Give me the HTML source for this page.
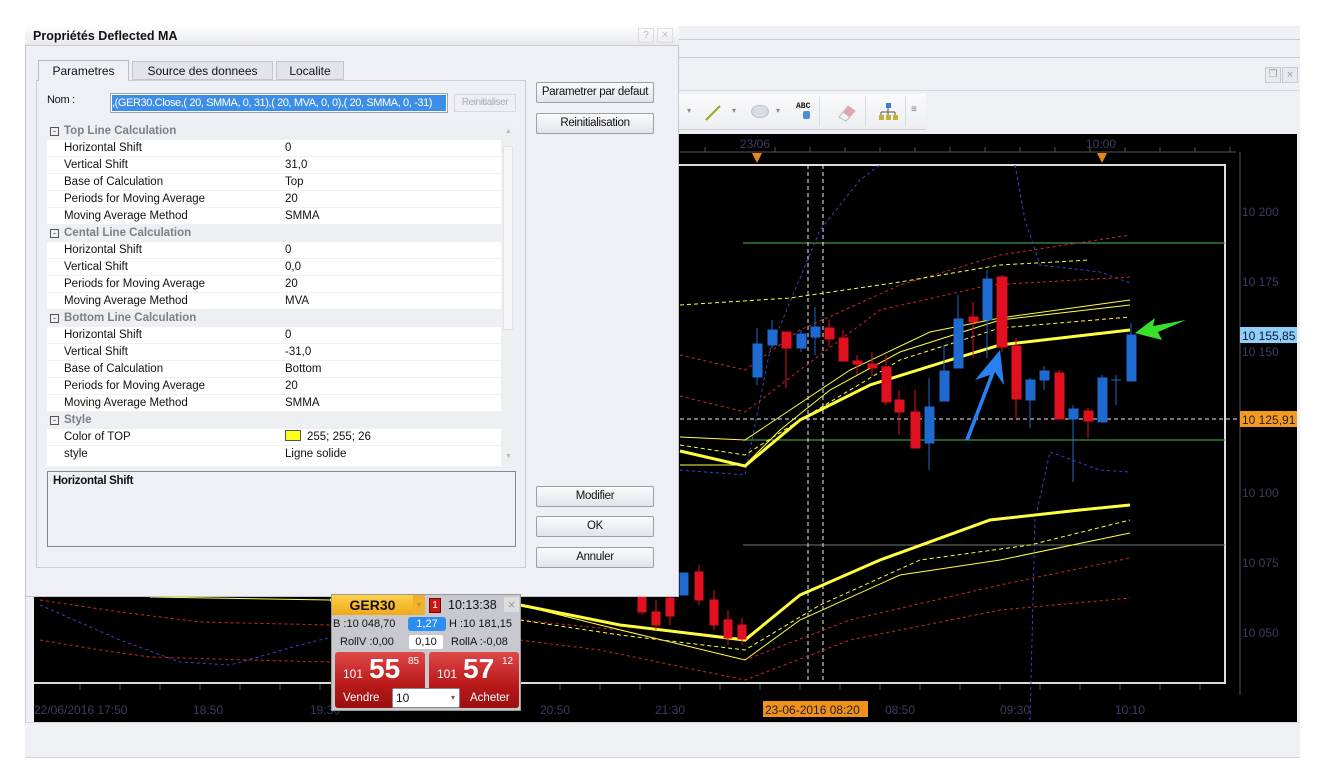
<!DOCTYPE html>
<html><head><meta charset="utf-8"><style>
*{box-sizing:border-box;margin:0;padding:0}
body{width:1322px;height:776px;background:#fff;position:relative;overflow:hidden;font-family:"Liberation Sans",sans-serif;font-size:12px;color:#111}
.abs{position:absolute}
.btn{position:absolute;left:536px;width:118px;height:21px;border:1px solid #9aa0a8;border-radius:2px;background:linear-gradient(#fbfbfc,#e2e4e8);font-size:11.5px;text-align:center;line-height:19px;letter-spacing:-0.3px}
.row{position:absolute;left:47px;width:454px;height:17px;font-size:11.5px;line-height:17px;background:#fff;border-bottom:1px solid #eef0f3}
.row .k{position:absolute;left:17px}
.row .v{position:absolute;left:238px}
.cat{position:absolute;left:47px;width:454px;height:17px;background:#eeeff3;font-weight:bold;color:#7b7f88;font-size:11.5px;line-height:17px}
.cat .k{position:absolute;left:17px}
.cat .box{position:absolute;left:3px;top:4px;width:9px;height:9px;border:1px solid #555;font-size:9px;line-height:6px;text-align:center;color:#333;font-weight:normal}
</style></head><body>
<div class="abs" style="left:25px;top:26px;width:1275px;height:732px;background:#eef0f4;border-left:1px solid #c8ccd2"></div>
<div class="abs" style="left:25px;top:39px;width:1275px;height:1px;background:#c3c8d0"></div>
<div class="abs" style="left:25px;top:57px;width:1275px;height:1px;background:#c3c8d0"></div>
<div class="abs" style="left:25px;top:90px;width:1275px;height:1px;background:#d6d9de"></div>
<div class="abs" style="left:1265px;top:67px;width:16px;height:16px;border:1px solid #c6cad0;background:#e8eaee;color:#999;font-size:10px;text-align:center;line-height:14px">❐</div>
<div class="abs" style="left:1282px;top:67px;width:16px;height:16px;border:1px solid #c6cad0;background:#e8eaee;color:#999;font-size:11px;text-align:center;line-height:14px">×</div>
<div class="abs" style="left:675px;top:94px;width:251px;height:36px;background:linear-gradient(#fafafb,#eceef1);border-bottom:1px solid #cfd3d8"></div>
<div class="abs" style="left:687px;top:106px;color:#888;font-size:8px">▾</div>
<svg class="abs" style="left:703px;top:103px" width="20" height="20"><line x1="3" y1="17" x2="17" y2="3" stroke="#9aa820" stroke-width="2"/></svg>
<div class="abs" style="left:732px;top:106px;color:#888;font-size:8px">▾</div>
<div class="abs" style="left:751px;top:105px;width:18px;height:13px;border-radius:50%;background:#d8dce6;border:1px solid #b8bdcc"></div>
<div class="abs" style="left:776px;top:106px;color:#888;font-size:8px">▾</div>
<div class="abs" style="left:796px;top:102px;font-size:8px;font-family:'Liberation Mono';font-weight:bold">ABC</div>
<div class="abs" style="left:803px;top:111px;width:7px;height:8px;background:#4a8fd0;border-radius:2px"></div>
<div class="abs" style="left:819px;top:96px;width:1px;height:30px;background:#d8dbe0"></div>
<svg class="abs" style="left:836px;top:102px" width="22" height="20"><path d="M3 15 L12 4 L19 9 L10 19 Z" fill="#e9a0a8" stroke="#bbb"/><path d="M3 15 L7 10 L14 15 L10 19Z" fill="#f2f2f2" stroke="#bbb"/></svg>
<div class="abs" style="left:865px;top:96px;width:1px;height:30px;background:#d8dbe0"></div>
<svg class="abs" style="left:878px;top:102px" width="20" height="20"><rect x="8" y="1" width="5" height="5" fill="#3a7fd0"/><path d="M10 6V10M3 10H17M3 10V13M10 10V13M17 10V13" stroke="#555" fill="none"/><rect x="1" y="13" width="5" height="5" fill="#c8b030"/><rect x="8" y="13" width="5" height="5" fill="#c8b030"/><rect x="15" y="13" width="5" height="5" fill="#c8b030"/></svg>
<div class="abs" style="left:905px;top:96px;width:1px;height:30px;background:#d8dbe0"></div>
<div class="abs" style="left:911px;top:104px;color:#777;font-size:10px">≡</div>

<svg class="abs" style="left:0;top:0" width="1322" height="776">
<rect x="34" y="134" width="1263" height="588" fill="#000"/>
<line x1="680" y1="152" x2="1236" y2="152" stroke="#555"/>
<g stroke="#555"><line x1="705" y1="152" x2="705" y2="147"/><line x1="775" y1="152" x2="775" y2="147"/><line x1="810" y1="152" x2="810" y2="147"/><line x1="845" y1="152" x2="845" y2="147"/><line x1="880" y1="152" x2="880" y2="147"/><line x1="915" y1="152" x2="915" y2="147"/><line x1="950" y1="152" x2="950" y2="147"/><line x1="985" y1="152" x2="985" y2="147"/><line x1="1020" y1="152" x2="1020" y2="147"/><line x1="1055" y1="152" x2="1055" y2="147"/><line x1="1090" y1="152" x2="1090" y2="147"/><line x1="1125" y1="152" x2="1125" y2="147"/><line x1="1160" y1="152" x2="1160" y2="147"/><line x1="1195" y1="152" x2="1195" y2="147"/><line x1="1230" y1="152" x2="1230" y2="147"/></g>
<text x="740" y="148" fill="#3a3d60" font-size="12" font-family="Liberation Sans">23/06</text>
<text x="1086" y="148" fill="#3a3d60" font-size="12" font-family="Liberation Sans">10:00</text>
<path d="M752 153 h10 l-5 10z" fill="#e58a1a"/><path d="M1097 153 h10 l-5 10z" fill="#e58a1a"/>
<path d="M34 165 H1225 V683 H34" fill="none" stroke="#ddd" stroke-width="2"/>
<line x1="1240" y1="152" x2="1240" y2="695" stroke="#555"/>
<g fill="#3a3d60" font-size="12" font-family="Liberation Sans">
<text x="1242" y="216">10 200</text><text x="1242" y="286">10 175</text><text x="1242" y="356">10 150</text><text x="1242" y="497">10 100</text><text x="1242" y="567">10 075</text><text x="1242" y="637">10 050</text>
<text x="34" y="714">22/06/2016 17:50</text><text x="193" y="714">18:50</text><text x="310" y="714">19:30</text><text x="540" y="714">20:50</text><text x="655" y="714">21:30</text><text x="885" y="714">08:50</text><text x="1000" y="714">09:30</text><text x="1115" y="714">10:10</text>
</g>
<rect x="763" y="701" width="105" height="16" fill="#f0911e"/>
<text x="765" y="714" font-size="12" fill="#222" font-family="Liberation Sans">23-06-2016 08:20</text>
<rect x="1240" y="327" width="57" height="16" fill="#8fd0f8"/><text x="1242" y="340" font-size="12" fill="#113" font-family="Liberation Sans">10 155,85</text>
<rect x="1240" y="411" width="57" height="16" fill="#f49a22"/><text x="1242" y="424" font-size="12" fill="#221" font-family="Liberation Sans">10 125,91</text>
<g stroke="#555"><path d="M80 684v6M120 684v6M160 684v6M200 684v6M240 684v6M280 684v6M320 684v6M360 684v6M400 684v6M440 684v6M480 684v6M520 684v6M560 684v6M600 684v6M640 684v6M680 684v6M720 684v6M760 684v6M800 684v6M840 684v6M880 684v6M920 684v6M960 684v6M1000 684v6M1040 684v6M1080 684v6M1120 684v6M1160 684v6M1200 684v6"/></g>
<line x1="743" y1="243" x2="1225" y2="243" stroke="#3c9a3c" stroke-width="1.3"/>
<line x1="743" y1="440" x2="1225" y2="440" stroke="#3c9a3c" stroke-width="1.3"/>
<line x1="743" y1="545" x2="1225" y2="545" stroke="#777"/>
<line x1="680" y1="419" x2="1240" y2="419" stroke="#eee" stroke-dasharray="4 3"/>
<line x1="808" y1="165" x2="808" y2="683" stroke="#eee" stroke-dasharray="4 3"/>
<line x1="823" y1="165" x2="823" y2="683" stroke="#eee" stroke-dasharray="4 3"/>
<g fill="none" stroke="#4040c8" stroke-dasharray="3 3">
<path d="M40 605 L120 640 L180 662 L230 665 L300 645 L400 620 L500 590 L560 565"/>
<path d="M680 470 L745 475 L770 350 L820 230 L860 180 L880 165"/>
<path d="M1015 165 L1025 220 L1040 265 L1100 272 L1130 283"/>
<path d="M1030 720 L1035 520 L1050 452 L1100 470 L1130 472"/>
</g>
<g fill="none" stroke="#d02828" stroke-dasharray="3 3">
<path d="M680 355 L745 370 L800 330 L900 285 L1000 255 L1130 235"/>
<path d="M680 396 L745 412 L800 370 L880 310 L990 285 L1130 277"/>
<path d="M40 600 L120 612 L200 622 L330 625"/>
<path d="M40 640 L100 650 L150 657 L250 660 L330 662"/>
<path d="M520 640 L600 650 L745 680 L850 640 L1000 610 L1130 598"/>
<path d="M520 620 L620 630 L745 660 L850 620 L1000 585 L1130 558"/>
</g>
<g fill="none" stroke="#ffff40">
<path d="M680 465 L745 465 L780 430 L830 390 L900 352 L1000 320 L1130 305"/>
<path d="M680 437 L745 440 L790 410 L850 370 L930 332 L1000 318 L1130 300" stroke-width="1"/>
<path d="M680 305 L790 298 L900 282 L1000 265 L1090 260" stroke-dasharray="4 3"/>
<path d="M680 445 L745 455 L800 420 L900 360 L1000 328 L1130 317" stroke-dasharray="4 3"/>
<path d="M680 451 L745 466 L800 420 L870 385 L950 360 L1000 345 L1130 330" stroke-width="3"/>
<path d="M150 597 L330 600"/>
<path d="M520 605 L600 625 L745 660 L800 620 L900 575 L1000 560 L1130 533"/>
<path d="M520 620 L620 635 L745 650 L820 605 L920 560 L1030 545 L1130 520" stroke-dasharray="4 3"/>
<path d="M380 600 L330 600 M520 605 L620 625 L745 640 L800 595 L880 560 L990 520 L1080 510 L1130 505" stroke-width="3"/>
</g>
<g stroke-width="1">
<g fill="#1e6ad0" stroke="#1e6ad0">
<line x1="757" y1="328" x2="757" y2="385"/><rect x="753" y="344" width="9" height="33"/>
<line x1="772" y1="320" x2="772" y2="348"/><rect x="768" y="330" width="9" height="15"/>
<line x1="801" y1="330" x2="801" y2="352"/><rect x="797" y="334" width="9" height="14"/>
<line x1="815" y1="307" x2="815" y2="355"/><rect x="811" y="327" width="9" height="10"/>
<line x1="929" y1="378" x2="929" y2="470"/><rect x="925" y="407" width="9" height="36"/>
<line x1="944" y1="345" x2="944" y2="401"/><rect x="940" y="371" width="9" height="30"/>
<line x1="958" y1="295" x2="958" y2="368"/><rect x="954" y="319" width="9" height="49"/>
<line x1="987" y1="270" x2="987" y2="358"/><rect x="983" y="279" width="9" height="41"/>
<line x1="1030" y1="378" x2="1030" y2="428"/><rect x="1026" y="380" width="9" height="20"/>
<line x1="1044" y1="366" x2="1044" y2="390"/><rect x="1040" y="371" width="9" height="9"/>
<line x1="1073" y1="405" x2="1073" y2="482"/><rect x="1069" y="409" width="9" height="10"/>
<line x1="1102" y1="375" x2="1102" y2="422"/><rect x="1098" y="378" width="9" height="44"/>
<line x1="1116" y1="375" x2="1116" y2="405"/><line x1="1111" y1="380" x2="1121" y2="380"/>
<line x1="1131" y1="323" x2="1131" y2="381"/><rect x="1127" y="335" width="9" height="46"/>
<rect x="680" y="573" width="8" height="22"/>
</g>
<g fill="#e01020" stroke="#e01020">
<line x1="786" y1="332" x2="786" y2="388"/><rect x="782" y="332" width="9" height="16"/>
<line x1="829" y1="320" x2="829" y2="347"/><rect x="825" y="328" width="9" height="11"/>
<line x1="843" y1="330" x2="843" y2="361"/><rect x="839" y="338" width="9" height="23"/>
<line x1="857" y1="355" x2="857" y2="375"/><rect x="853" y="361" width="9" height="3"/>
<line x1="872" y1="352" x2="872" y2="376"/><rect x="868" y="364" width="9" height="4"/>
<line x1="886" y1="355" x2="886" y2="405"/><rect x="882" y="367" width="9" height="35"/>
<line x1="899" y1="390" x2="899" y2="435"/><rect x="895" y="400" width="9" height="12"/>
<line x1="915" y1="390" x2="915" y2="448"/><rect x="911" y="412" width="9" height="36"/>
<line x1="973" y1="302" x2="973" y2="358"/><rect x="969" y="317" width="9" height="5"/>
<line x1="1002" y1="275" x2="1002" y2="352"/><rect x="997" y="277" width="10" height="70"/>
<line x1="1016" y1="338" x2="1016" y2="418"/><rect x="1012" y="346" width="9" height="53"/>
<line x1="1059" y1="370" x2="1059" y2="419"/><rect x="1055" y="373" width="9" height="46"/>
<line x1="1088" y1="408" x2="1088" y2="438"/><rect x="1084" y="411" width="9" height="10"/>
<line x1="642" y1="585" x2="642" y2="615"/><rect x="638" y="597" width="8" height="15"/>
<line x1="656" y1="600" x2="656" y2="630"/><rect x="652" y="612" width="8" height="13"/>
<line x1="670" y1="590" x2="670" y2="625"/><rect x="666" y="598" width="8" height="18"/>
<line x1="699" y1="565" x2="699" y2="605"/><rect x="695" y="572" width="8" height="28"/>
<line x1="714" y1="590" x2="714" y2="630"/><rect x="710" y="600" width="8" height="25"/>
<line x1="728" y1="610" x2="728" y2="645"/><rect x="724" y="620" width="8" height="18"/>
<line x1="742" y1="618" x2="742" y2="645"/><rect x="738" y="625" width="8" height="14"/>
</g>
</g>
<path d="M965 440 L990 375 L975 380 L1000 350 L1004 385 L995 372 L969 440 Z" fill="#2a80f0"/>
<path d="M1135 333 L1155 318 L1153 326 L1186 320 L1158 332 L1162 340 Z" fill="#39e02a"/>
</svg>
<div class="abs" style="left:25px;top:722px;width:1275px;height:36px;background:#eef0f4;border-top:1px solid #d0d4da;border-bottom:1px solid #d0d4da"></div>

<!-- dialog -->
<div class="abs" style="left:25px;top:26px;width:654px;height:571px;background:#eff0f5;border:1px solid #c4c7cf;border-top:none"></div>
<div class="abs" style="left:25px;top:26px;width:654px;height:20px;background:linear-gradient(#fefefe,#e8e9ed);border-bottom:1px solid #ccc"></div>
<div class="abs" style="left:33px;top:28px;font-weight:bold;font-size:12.5px;line-height:16px">Propriétés Deflected MA</div>
<div class="abs" style="left:638px;top:28px;width:16px;height:15px;border:1px solid #ddd;color:#bbb;font-size:10px;text-align:center;line-height:13px">?</div>
<div class="abs" style="left:657px;top:28px;width:16px;height:15px;border:1px solid #ddd;color:#bbb;font-size:11px;text-align:center;line-height:13px">×</div>
<div class="abs" style="left:36px;top:80px;width:490px;height:488px;border:1px solid #c8cbd2;background:#eff0f5"></div>
<div class="abs" style="left:38px;top:60px;width:91px;height:21px;background:#eff0f5;border:1px solid #b9bcc4;border-bottom:none;text-align:center;line-height:21px;font-size:12px">Parametres</div>
<div class="abs" style="left:132px;top:61px;width:141px;height:19px;background:#e2e4ea;border:1px solid #c2c5cc;text-align:center;line-height:19px;font-size:12px">Source des donnees</div>
<div class="abs" style="left:276px;top:61px;width:68px;height:19px;background:#e2e4ea;border:1px solid #c2c5cc;text-align:center;line-height:19px;font-size:12px">Localite</div>
<div class="abs" style="left:47px;top:94px;font-size:11px;letter-spacing:-0.3px">Nom :</div>
<div class="abs" style="left:110px;top:93px;width:338px;height:20px;border:1px solid #9aa;background:#fff"></div>
<div class="abs" style="left:112px;top:95px;width:334px;height:16px;background:#3d8ee6;color:#fff;font-size:11px;line-height:16px;letter-spacing:-0.4px;white-space:nowrap;overflow:hidden">,(GER30.Close,( 20, SMMA, 0, 31),( 20, MVA, 0, 0),( 20, SMMA, 0, -31)</div>
<div class="abs" style="left:454px;top:94px;width:62px;height:18px;border:1px solid #d6d8dc;color:#aaa;font-size:10px;text-align:center;line-height:16px;letter-spacing:-0.4px">Reinitialiser</div>
<div class="btn" style="top:82px">Parametrer par defaut</div>
<div class="btn" style="top:113px">Reinitialisation</div>
<div class="btn" style="top:486px">Modifier</div>
<div class="btn" style="top:516px">OK</div>
<div class="btn" style="top:547px">Annuler</div>
<div class="abs" style="left:47px;top:123px;width:468px;height:344px;background:#eeeff3"></div>
<div class="abs" style="left:501px;top:126px;width:14px;height:340px;background:#eeeff3"></div>
<div class="abs" style="left:503px;top:146px;width:10px;height:184px;background:#f6f6f8;border:1px solid #e0e2e6"></div>
<div class="abs" style="left:505px;top:128px;font-size:7px;color:#bbb">▲</div>
<div class="abs" style="left:505px;top:453px;font-size:7px;color:#bbb">▼</div>
<div class="cat" style="top:123px"><span class="box">-</span><span class="k">Top Line Calculation</span></div>
<div class="row" style="top:140px"><span class="k">Horizontal Shift</span><span class="v">0</span></div>
<div class="row" style="top:157px"><span class="k">Vertical Shift</span><span class="v">31,0</span></div>
<div class="row" style="top:174px"><span class="k">Base of Calculation</span><span class="v">Top</span></div>
<div class="row" style="top:191px"><span class="k">Periods for Moving Average</span><span class="v">20</span></div>
<div class="row" style="top:208px"><span class="k">Moving Average Method</span><span class="v">SMMA</span></div>
<div class="cat" style="top:225px"><span class="box">-</span><span class="k">Cental Line Calculation</span></div>
<div class="row" style="top:242px"><span class="k">Horizontal Shift</span><span class="v">0</span></div>
<div class="row" style="top:259px"><span class="k">Vertical Shift</span><span class="v">0,0</span></div>
<div class="row" style="top:276px"><span class="k">Periods for Moving Average</span><span class="v">20</span></div>
<div class="row" style="top:293px"><span class="k">Moving Average Method</span><span class="v">MVA</span></div>
<div class="cat" style="top:310px"><span class="box">-</span><span class="k">Bottom Line Calculation</span></div>
<div class="row" style="top:327px"><span class="k">Horizontal Shift</span><span class="v">0</span></div>
<div class="row" style="top:344px"><span class="k">Vertical Shift</span><span class="v">-31,0</span></div>
<div class="row" style="top:361px"><span class="k">Base of Calculation</span><span class="v">Bottom</span></div>
<div class="row" style="top:378px"><span class="k">Periods for Moving Average</span><span class="v">20</span></div>
<div class="row" style="top:395px"><span class="k">Moving Average Method</span><span class="v">SMMA</span></div>
<div class="cat" style="top:412px"><span class="box">-</span><span class="k">Style</span></div>
<div class="row" style="top:429px"><span class="k">Color of TOP</span><span class="v"><span style="display:inline-block;width:16px;height:11px;background:#ffff1a;border:1px solid #555;vertical-align:-1px;margin-right:6px"></span>255; 255; 26</span></div>
<div class="row" style="top:446px;height:21px;overflow:hidden"><span class="k">style</span><span class="v">Ligne solide</span></div>
<div class="abs" style="left:47px;top:471px;width:469px;height:76px;border:1px solid #888;background:#eff0f5"></div>
<div class="abs" style="left:53px;top:475px;font-weight:bold;font-size:11.5px;letter-spacing:-0.3px">Horizontal Shift</div>

<!-- trade widget -->
<div class="abs" style="left:331px;top:594px;width:190px;height:117px;background:#c7c9ce;border:1px solid #999"></div>
<div class="abs" style="left:332px;top:595px;width:81px;height:20px;background:linear-gradient(#ffd24a,#f0a818);font-weight:bold;font-size:14px;text-align:center;line-height:20px">GER30</div>
<div class="abs" style="left:413px;top:595px;width:12px;height:20px;background:#f0b030;color:#d08a10;font-size:8px;line-height:20px;text-align:center">▾</div>
<div class="abs" style="left:429px;top:598px;width:12px;height:15px;background:#c81818;border:1px solid #700;color:#fff;font-size:10px;text-align:center;line-height:13px">1</div>
<div class="abs" style="left:448px;top:597px;font-size:12.5px;line-height:16px">10:13:38</div>
<div class="abs" style="left:504px;top:597px;width:15px;height:15px;background:#ddd;color:#999;font-size:13px;text-align:center;line-height:15px">×</div>
<div class="abs" style="left:333px;top:618px;font-size:11px">B :10 048,70</div>
<div class="abs" style="left:408px;top:617px;width:38px;height:14px;background:#2c8ef0;border-radius:3px;color:#fff;font-size:11px;text-align:center;line-height:14px">1,27</div>
<div class="abs" style="left:449px;top:618px;font-size:11px">H :10 181,15</div>
<div class="abs" style="left:340px;top:636px;font-size:11px">RollV :0,00</div>
<div class="abs" style="left:409px;top:635px;width:34px;height:14px;background:#fff;border-radius:2px;font-size:11px;text-align:center;line-height:14px">0,10</div>
<div class="abs" style="left:451px;top:636px;font-size:11px">RollA :-0,08</div>
<div class="abs" style="left:335px;top:652px;width:90px;height:56px;background:linear-gradient(#e04848,#b81818 60%,#9a1010);border-radius:3px"></div>
<div class="abs" style="left:429px;top:652px;width:90px;height:56px;background:linear-gradient(#e04848,#b81818 60%,#9a1010);border-radius:3px"></div>
<div class="abs" style="left:343px;top:667px;color:#fff;font-size:12px">101</div>
<div class="abs" style="left:369px;top:653px;color:#fff;font-size:28px;font-weight:bold">55</div>
<div class="abs" style="left:408px;top:656px;color:#fff;font-size:10px">85</div>
<div class="abs" style="left:437px;top:667px;color:#fff;font-size:12px">101</div>
<div class="abs" style="left:463px;top:653px;color:#fff;font-size:28px;font-weight:bold">57</div>
<div class="abs" style="left:502px;top:656px;color:#fff;font-size:10px">12</div>
<div class="abs" style="left:343px;top:692px;color:#fff;font-size:11.5px">Vendre</div>
<div class="abs" style="left:470px;top:692px;color:#fff;font-size:11.5px">Acheter</div>
<div class="abs" style="left:392px;top:688px;width:68px;height:20px;background:#fff;border:1px solid #888;border-radius:2px;font-size:12px;line-height:18px;padding-left:3px">10<span style="position:absolute;right:4px;font-size:8px;color:#666">▾</span></div>
</body></html>
